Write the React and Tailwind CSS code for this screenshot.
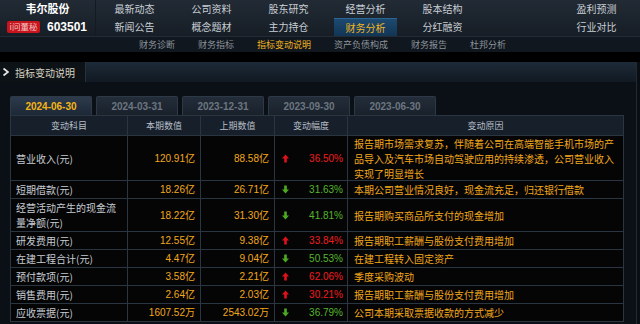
import React from "react";

const cn = '"Noto Sans CJK SC", "Noto Sans", sans-serif';
const num = '"Liberation Sans", "Noto Sans CJK SC", sans-serif';

const navRows = [
  ["最新动态", "公司资料", "股东研究", "经营分析", "股本结构", "", "盈利预测"],
  ["新闻公告", "概念题材", "主力持仓", "财务分析", "分红融资", "", "行业对比"],
];

const subNav = ["财务诊断", "财务指标", "指标变动说明", "资产负债构成", "财务报告", "杜邦分析"];

const tabs = ["2024-06-30", "2024-03-31", "2023-12-31", "2023-09-30", "2023-06-30"];

const rows = [
  { name: "营业收入(元)", cur: "120.91亿", prev: "88.58亿", up: true, pct: "36.50%", reason: "报告期市场需求复苏，伴随着公司在高端智能手机市场的产品导入及汽车市场自动驾驶应用的持续渗透，公司营业收入实现了明显增长", h: "h-[45px]" },
  { name: "短期借款(元)", cur: "18.26亿", prev: "26.71亿", up: false, pct: "31.63%", reason: "本期公司营业情况良好，现金流充足，归还银行借款", h: "h-[18px]" },
  { name: "经营活动产生的现金流量净额(元)", cur: "18.22亿", prev: "31.30亿", up: false, pct: "41.81%", reason: "报告期购买商品所支付的现金增加", h: "h-[33px]" },
  { name: "研发费用(元)", cur: "12.55亿", prev: "9.38亿", up: true, pct: "33.84%", reason: "报告期职工薪酬与股份支付费用增加", h: "h-[18px]" },
  { name: "在建工程合计(元)", cur: "4.47亿", prev: "9.04亿", up: false, pct: "50.53%", reason: "在建工程转入固定资产", h: "h-[18px]" },
  { name: "预付款项(元)", cur: "3.58亿", prev: "2.21亿", up: true, pct: "62.06%", reason: "季度采购波动", h: "h-[18px]" },
  { name: "销售费用(元)", cur: "2.64亿", prev: "2.03亿", up: true, pct: "30.21%", reason: "报告期职工薪酬与股份支付费用增加", h: "h-[18px]" },
  { name: "应收票据(元)", cur: "1607.52万", prev: "2543.02万", up: false, pct: "36.79%", reason: "公司本期采取票据收款的方式减少", h: "h-[18px]" },
];

function Arrow({ up }) {
  return (
    <svg width="7" height="9" viewBox="0 0 8 9" className={up ? "" : "rotate-180"}>
      <path d="M4 0 L8 4.5 L5.5 4.5 L5.5 9 L2.5 9 L2.5 4.5 L0 4.5 Z" fill={up ? "#e0101a" : "#4caa22"} />
    </svg>
  );
}

export default function App() {
  return (
    <div className="w-[640px] h-[324px] overflow-hidden bg-[#0a0e13] text-[10px]" style={{ fontFamily: cn }}>
      {/* header */}
      <div className="h-[36px] flex bg-gradient-to-b from-[#222b35] to-[#161d25]">
        <div className="w-[96px] flex flex-col border-r border-[#141a20]">
          <div className="h-[17px] flex items-center justify-center text-white font-bold text-[11px]">韦尔股份</div>
          <div className="h-[19px] flex items-center gap-[7px] pl-[7px]">
            <span className="h-[12px] w-[33px] flex items-center justify-center rounded-[2px] bg-[#c8141c] text-[8.5px] text-[#f3c8c8]">i问董秘</span>
            <span className="text-white font-bold text-[12px]" style={{ fontFamily: num }}>603501</span>
          </div>
        </div>
        <div className="flex-1 flex flex-col">
          {navRows.map((r, i) => (
            <div key={i} className={`flex ${i === 0 ? "h-[17px]" : "h-[19px]"}`}>
              {r.map((t, j) => (
                <div key={j} className="w-[77px] flex items-center justify-center">
                  {t === "财务分析" ? (
                    <span className="w-[63px] h-[18px] flex items-center justify-center bg-gradient-to-b from-[#1d4a70] to-[#123555] border-t border-[#2b6495] text-[#f1b521]">{t}</span>
                  ) : (
                    <span className="text-[#c9cfd6]">{t}</span>
                  )}
                </div>
              ))}
            </div>
          ))}
        </div>
      </div>
      {/* sub nav */}
      <div className="h-[16px] flex items-center gap-[23px] pl-[139px] bg-[#11171e] border-t border-[#232c36] text-[9px]">
        {subNav.map((t) => (
          <span key={t} className={t === "指标变动说明" ? "text-[#f1b521]" : "text-[#8a939c]"}>{t}</span>
        ))}
      </div>
      <div className="h-[10px] bg-black" />
      {/* panel */}
      <div className="h-[262px] mr-[3px] bg-[#0b1016] border-r border-[#1f2a36]">
        <div className="h-[20px] flex bg-gradient-to-b from-[#1d2a38] to-[#111922]">
          <div className="w-[86px] flex items-center gap-[6px] pl-[3px] bg-[#0d1217] border-r border-[#26313c]">
            <svg width="6" height="8" viewBox="0 0 6 8">
              <path d="M0.5 0.5 L5 4 L0.5 7.5" stroke="#e8e8e8" strokeWidth="1.8" fill="none" />
            </svg>
            <span className="text-[#d8d2c0] text-[10px]">指标变动说明</span>
          </div>
        </div>
        <div className="pt-[14px] pl-[10px] pr-[13px]">
          <div className="flex gap-[4px] h-[19px]">
            {tabs.map((t, i) => (
              <div
                key={t}
                className={`w-[82px] flex items-center justify-center rounded-t-[2px] border border-b-0 border-[#2d3946] font-bold text-[10px] ${
                  i === 0 ? "bg-gradient-to-b from-[#2c3b4c] to-[#1d2836] text-[#f2b519]" : "bg-gradient-to-b from-[#232d39] to-[#19212b] text-[#6c7580]"
                }`}
                style={{ fontFamily: num }}
              >
                {t}
              </div>
            ))}
          </div>
          <div className="border border-[#2a3542] w-[614px]">
            <div className="h-[19px] flex bg-[#17202a] text-[#b6bec8] text-[9px]">
              <div className="w-[117px] flex items-center justify-center border-r border-[#2a3542]">变动科目</div>
              <div className="w-[73px] flex items-center justify-center border-r border-[#2a3542]">本期数值</div>
              <div className="w-[74px] flex items-center justify-center border-r border-[#2a3542]">上期数值</div>
              <div className="w-[73px] flex items-center justify-center border-r border-[#2a3542]">变动幅度</div>
              <div className="flex-1 flex items-center justify-center">变动原因</div>
            </div>
            {rows.map((r) => (
              <div key={r.name} className={`${r.h} flex bg-[#050506] border-t border-[#2a3542] leading-[15px]`}>
                <div className="w-[117px] flex items-center px-[5px] border-r border-[#2a3542] text-[#c6ccd2]">{r.name}</div>
                <div className="w-[73px] flex items-center justify-end pr-[5px] border-r border-[#2a3542] text-[#f2a81c]" style={{ fontFamily: num }}>{r.cur}</div>
                <div className="w-[74px] flex items-center justify-end pr-[5px] border-r border-[#2a3542] text-[#f2a81c]" style={{ fontFamily: num }}>{r.prev}</div>
                <div className="w-[73px] flex items-center justify-between pl-[7px] pr-[4px] border-r border-[#2a3542]">
                  <Arrow up={r.up} />
                  <span className={r.up ? "text-[#f01c1c]" : "text-[#56b52a]"} style={{ fontFamily: num }}>{r.pct}</span>
                </div>
                <div className="flex-1 flex items-center px-[6px] text-[#f2a81c]">{r.reason}</div>
              </div>
            ))}
          </div>
        </div>
      </div>
    </div>
  );
}
